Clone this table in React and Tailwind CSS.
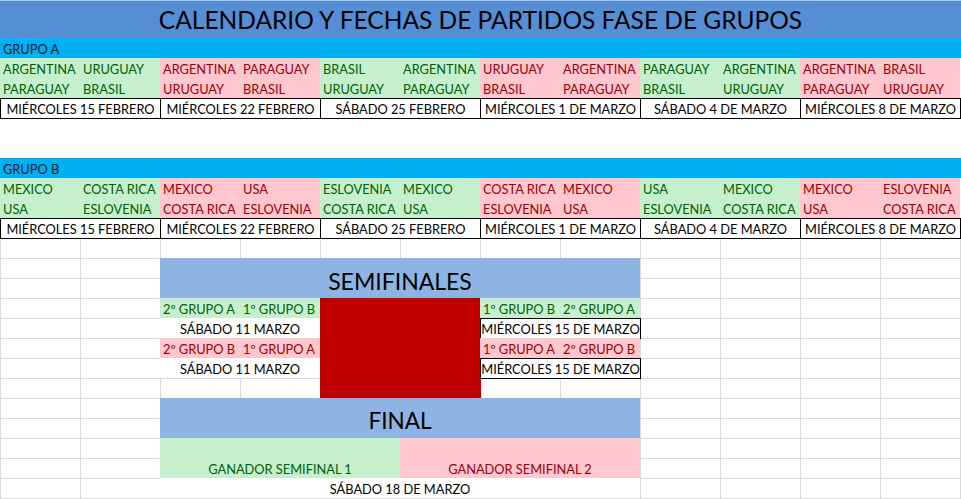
import React from "react";

const FONT = { fontFamily: "Lato, 'Open Sans', sans-serif" };

const GREEN = "bg-[#C6EFCE] text-[#006100]";
const RED = "bg-[#FFC7CE] text-[#9C0006]";

const groups = [
  {
    label: "GRUPO A",
    matches: [
      { tone: GREEN, r1: ["ARGENTINA", "URUGUAY"], r2: ["PARAGUAY", "BRASIL"] },
      { tone: RED, r1: ["ARGENTINA", "PARAGUAY"], r2: ["URUGUAY", "BRASIL"] },
      { tone: GREEN, r1: ["BRASIL", "ARGENTINA"], r2: ["URUGUAY", "PARAGUAY"] },
      { tone: RED, r1: ["URUGUAY", "ARGENTINA"], r2: ["BRASIL", "PARAGUAY"] },
      { tone: GREEN, r1: ["PARAGUAY", "ARGENTINA"], r2: ["BRASIL", "URUGUAY"] },
      { tone: RED, r1: ["ARGENTINA", "BRASIL"], r2: ["PARAGUAY", "URUGUAY"] },
    ],
  },
  {
    label: "GRUPO B",
    matches: [
      { tone: GREEN, r1: ["MEXICO", "COSTA RICA"], r2: ["USA", "ESLOVENIA"] },
      { tone: RED, r1: ["MEXICO", "USA"], r2: ["COSTA RICA", "ESLOVENIA"] },
      { tone: GREEN, r1: ["ESLOVENIA", "MEXICO"], r2: ["COSTA RICA", "USA"] },
      { tone: RED, r1: ["COSTA RICA", "MEXICO"], r2: ["ESLOVENIA", "USA"] },
      { tone: GREEN, r1: ["USA", "MEXICO"], r2: ["ESLOVENIA", "COSTA RICA"] },
      { tone: RED, r1: ["MEXICO", "ESLOVENIA"], r2: ["USA", "COSTA RICA"] },
    ],
  },
];

const dates = [
  "MIÉRCOLES 15 FEBRERO",
  "MIÉRCOLES 22 FEBRERO",
  "SÁBADO 25 FEBRERO",
  "MIÉRCOLES 1 DE MARZO",
  "SÁBADO 4 DE MARZO",
  "MIÉRCOLES 8 DE MARZO",
];

function Cell({ children }) {
  return (
    <div className="flex h-[20px] items-end overflow-hidden whitespace-nowrap pb-[2px] pl-[3px] text-[12.8px] leading-none">
      {children}
    </div>
  );
}

function DateRow({ raised }) {
  return (
    <div className={"flex h-[21px] " + (raised ? "relative z-10" : "")}>
      {dates.map((d, i) => (
        <div
          key={d}
          className={
            "flex h-[21px] w-[161px] shrink-0 items-center justify-center whitespace-nowrap border border-black bg-white pt-[2px] text-[12.8px] leading-none text-black " +
            (i > 0 ? "-ml-px" : "")
          }
        >
          {d}
        </div>
      ))}
    </div>
  );
}

function Group({ group, raised }) {
  return (
    <div className="flex flex-col">
      <div className="flex h-[20px] items-end bg-[#00B0F0] pb-[2px] pl-[3px] text-[12.8px] leading-none text-[#0a1a2a]">
        {group.label}
      </div>
      <div className="flex">
        {group.matches.map((m, i) => (
          <div key={i} className={"grid w-[160px] shrink-0 grid-cols-2 " + m.tone}>
            <Cell>{m.r1[0]}</Cell>
            <Cell>{m.r1[1]}</Cell>
            <Cell>{m.r2[0]}</Cell>
            <Cell>{m.r2[1]}</Cell>
          </div>
        ))}
      </div>
      <DateRow raised={raised} />
    </div>
  );
}

function Lower() {
  return (
    <div className="-mt-px grid h-[261px] grid-cols-[repeat(12,80px)_1px] grid-rows-[repeat(13,20px)_1px] bg-[linear-gradient(to_right,#dadada_1px,transparent_1px),linear-gradient(to_bottom,#dadada_1px,transparent_1px)] bg-[size:80px_20px]">
      {/* Semifinales header */}
      <div className="col-start-3 col-span-6 row-start-2 row-span-2 flex items-end justify-center bg-[#8DB4E2] pb-[5px] text-[23px] leading-none text-black">
        SEMIFINALES
      </div>

      {/* left semis */}
      <div className={"col-start-3 row-start-4 " + GREEN}>
        <Cell>2º GRUPO A</Cell>
      </div>
      <div className={"col-start-4 row-start-4 " + GREEN}>
        <Cell>1º GRUPO B</Cell>
      </div>
      <div className="col-start-3 col-span-2 row-start-5 flex items-center justify-center bg-white pt-[2px] text-[12.8px] leading-none text-black">
        SÁBADO 11 MARZO
      </div>
      <div className={"col-start-3 row-start-6 " + RED}>
        <Cell>2º GRUPO B</Cell>
      </div>
      <div className={"col-start-4 row-start-6 " + RED}>
        <Cell>1º GRUPO A</Cell>
      </div>
      <div className="col-start-3 col-span-2 row-start-7 flex items-center justify-center bg-white pt-[2px] text-[12.8px] leading-none text-black">
        SÁBADO 11 MARZO
      </div>

      {/* red block */}
      <div className="col-start-5 col-span-2 row-start-4 row-span-5 w-[161px] bg-[#C00000]" />

      {/* right semis */}
      <div className={"col-start-7 row-start-4 " + GREEN}>
        <Cell>1º GRUPO B</Cell>
      </div>
      <div className={"col-start-8 row-start-4 " + GREEN}>
        <Cell>2º GRUPO A</Cell>
      </div>
      <div className="col-start-7 col-span-2 row-start-5 flex h-[21px] w-[161px] items-center justify-center whitespace-nowrap border border-black bg-white pt-[2px] text-[12.8px] leading-none text-black">
        MIÉRCOLES 15 DE MARZO
      </div>
      <div className={"col-start-7 row-start-6 " + RED}>
        <Cell>1º GRUPO A</Cell>
      </div>
      <div className={"col-start-8 row-start-6 " + RED}>
        <Cell>2º GRUPO B</Cell>
      </div>
      <div className="col-start-7 col-span-2 row-start-7 flex h-[21px] w-[161px] items-center justify-center whitespace-nowrap border border-black bg-white pt-[2px] text-[12.8px] leading-none text-black">
        MIÉRCOLES 15 DE MARZO
      </div>

      {/* Final */}
      <div className="col-start-3 col-span-6 row-start-9 row-span-2 flex items-end justify-center bg-[#8DB4E2] pb-[6px] text-[22.5px] leading-none text-black">
        FINAL
      </div>
      <div className={"col-start-3 col-span-3 row-start-11 row-span-2 flex items-end justify-center pb-[2px] text-[12.8px] leading-none " + GREEN}>
        GANADOR SEMIFINAL 1
      </div>
      <div className={"col-start-6 col-span-3 row-start-11 row-span-2 flex items-end justify-center pb-[2px] text-[12.8px] leading-none " + RED}>
        GANADOR SEMIFINAL 2
      </div>
      <div className="col-start-3 col-span-6 row-start-13 flex items-center justify-center bg-white pt-[2px] text-[12.8px] leading-none text-black">
        SÁBADO 18 DE MARZO
      </div>
    </div>
  );
}

export default function App() {
  return (
    <div className="h-[499px] w-[961px] overflow-hidden bg-white" style={FONT}>
      <div className="flex h-[38px] items-end justify-center border-t border-[#a9c4e8] bg-[#558ED5] pb-[6px] text-[24.5px] leading-none text-black">
        CALENDARIO Y FECHAS DE PARTIDOS FASE DE GRUPOS
      </div>
      <Group group={groups[0]} />
      <div className="h-[39px]" />
      <Group group={groups[1]} raised />
      <Lower />
    </div>
  );
}
